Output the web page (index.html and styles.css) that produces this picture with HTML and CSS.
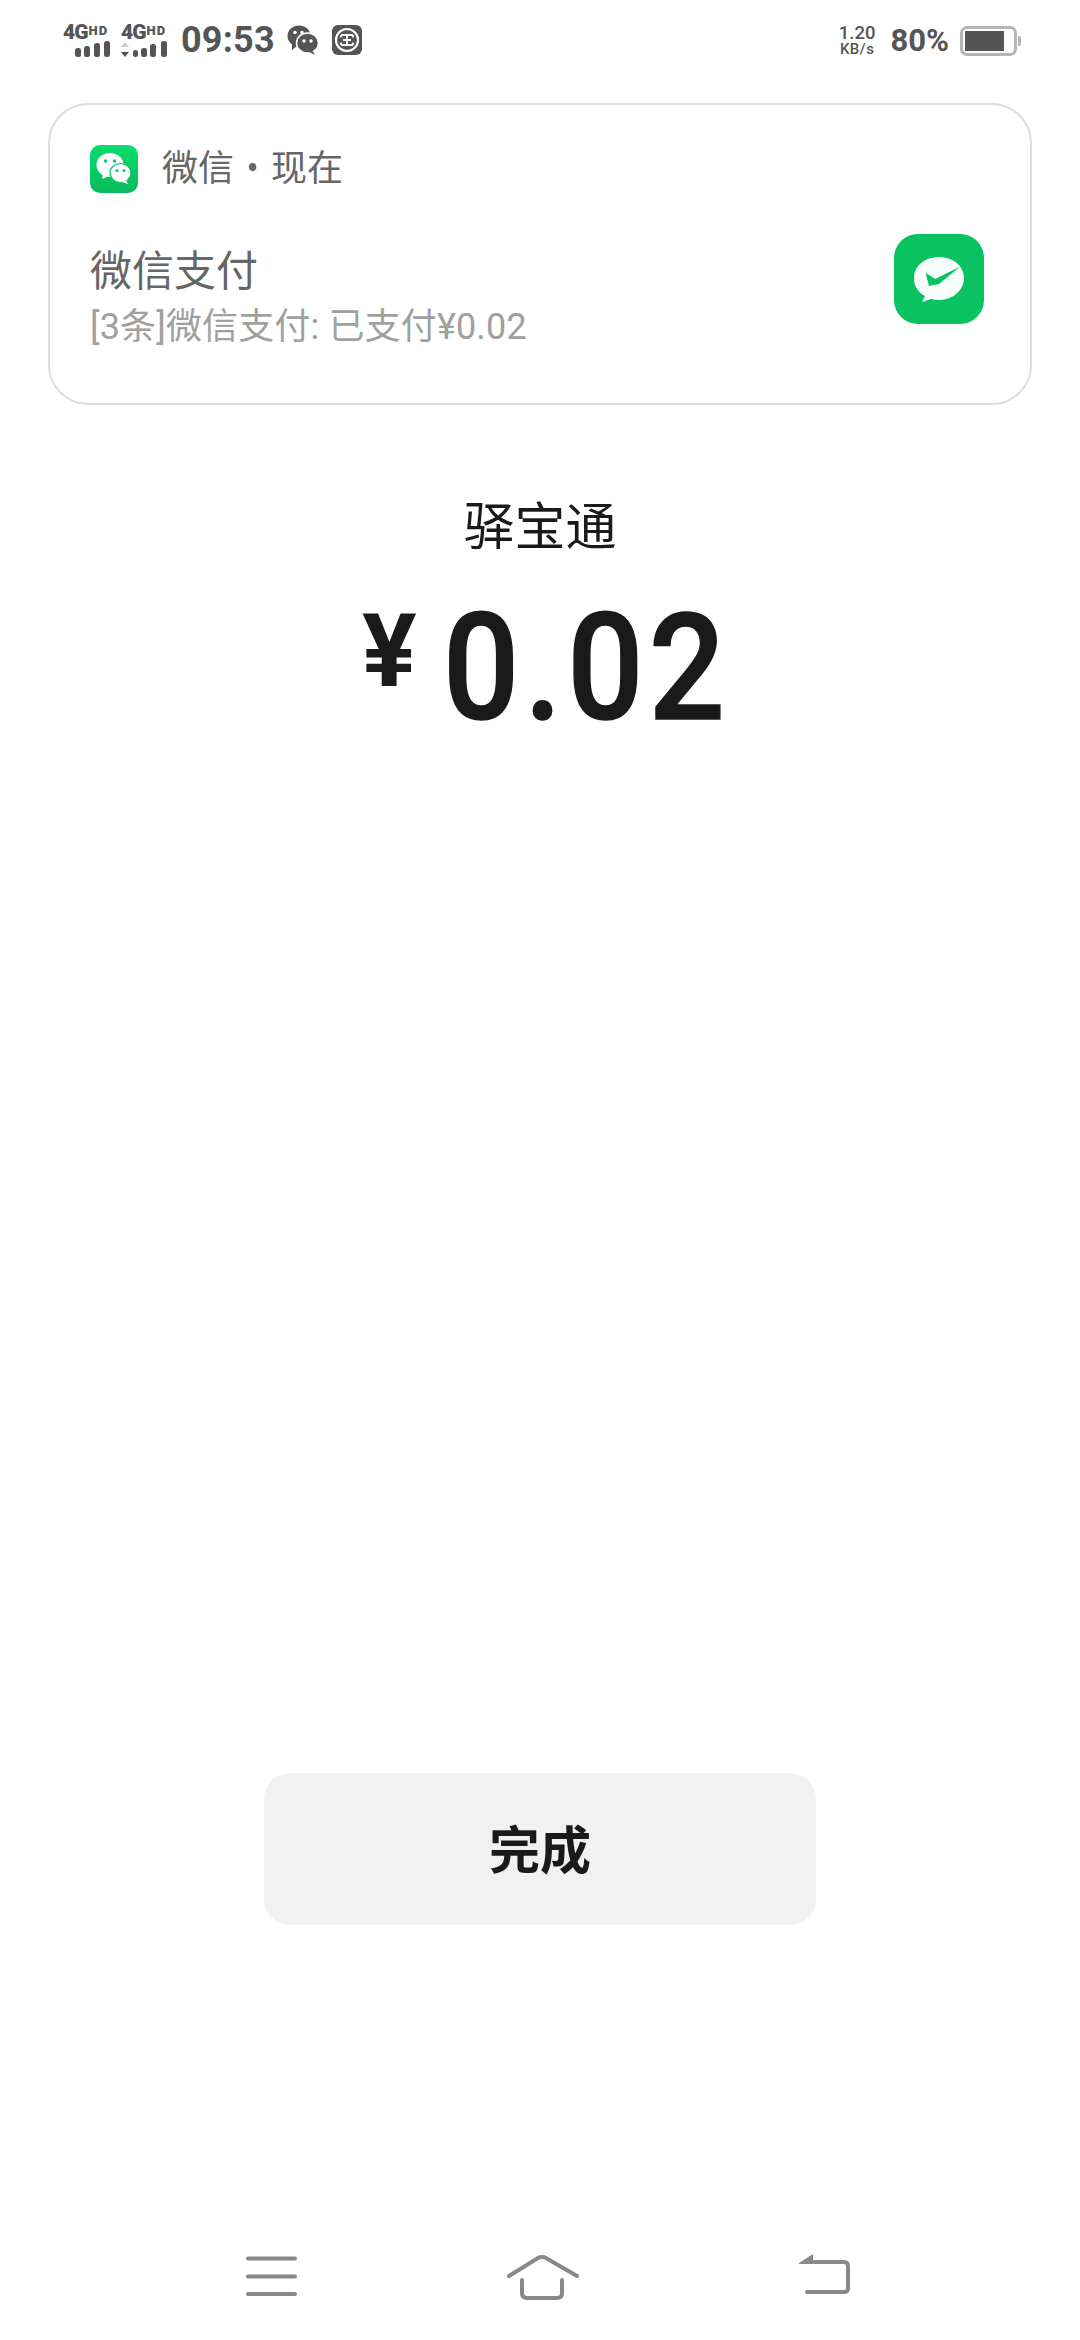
FILE: index.html
```html
<!DOCTYPE html>
<html lang="zh">
<head>
<meta charset="utf-8">
<title>支付成功</title>
<link rel="stylesheet" href="styles.css">
</head>
<body>
<div class="screen">
  <header class="status">
    <div class="status-left">
      <div class="sig">
        <div class="sig-label"><span class="g4">4G</span><span class="hd">HD</span></div>
        <svg class="bars" width="36" height="17" viewBox="0 0 36 17"><g fill="#555"><rect x="1" y="7" width="6" height="9" rx="2.5"/><rect x="10" y="5" width="6" height="11" rx="2.5"/><rect x="20" y="2" width="6" height="14" rx="2.5"/><rect x="30" y="0" width="6" height="16" rx="2.5"/></g></svg>
      </div>
      <div class="sig">
        <div class="sig-label"><span class="g4">4G</span><span class="hd">HD</span></div>
        <svg class="bars" width="48" height="17" viewBox="0 0 48 17"><path d="M1 6 5 1 9 6z" fill="#ccc"/><path d="M1 11h8l-4 5z" fill="#555"/><g fill="#555"><rect x="13" y="9" width="5" height="7" rx="2.5"/><rect x="21" y="7" width="6" height="9" rx="2.5"/><rect x="30" y="3" width="6" height="13" rx="2.5"/><rect x="41" y="0" width="6" height="16" rx="2.5"/></g></svg>
      </div>
      <span class="time">09:53</span>
      <svg class="st-wx" width="31" height="30" viewBox="0 0 31 30"><ellipse cx="12" cy="11" rx="11.500" ry="10.500" fill="#555"/><path d="M5 17 5 25 11 20z" fill="#555"/><ellipse cx="20.500" cy="18" rx="11" ry="10" fill="#555" stroke="#fff" stroke-width="1.500"/><path d="M25 25 28 30 22 27z" fill="#555"/><circle cx="8" cy="7.500" r="1.800" fill="#fff"/><circle cx="15" cy="7.500" r="1.800" fill="#fff"/><circle cx="17" cy="16" r="1.800" fill="#fff"/><circle cx="24" cy="16" r="1.800" fill="#fff"/></svg>
      <svg class="st-bank" width="30" height="30" viewBox="0 0 30 30"><rect width="30" height="30" rx="6" fill="#555"/><circle cx="15" cy="15" r="11" fill="none" stroke="#fff" stroke-width="2.200"/><path d="M9 10h12M15 10v10M11 15h8M9 20h12M9 10v2.500M21 10v2.500M9 17.500V20M21 17.500V20" fill="none" stroke="#fff" stroke-width="1.800"/></svg>
    </div>
    <div class="status-right">
      <div class="speed"><span class="speed-n">1.20</span><span class="speed-u">KB/s</span></div>
      <span class="pct">80%</span>
      <div class="battery"><div class="battery-body"><div class="battery-fill"></div></div><div class="battery-nub"></div></div>
    </div>
  </header>

  <section class="card">
    <div class="card-head">
      <svg class="app-icon" width="48" height="48" viewBox="0 0 48 48">
        <defs><linearGradient id="wxg" x1="0" y1="0" x2="0" y2="1"><stop offset="0" stop-color="#0bdc6d"/><stop offset="1" stop-color="#07bb5c"/></linearGradient></defs>
        <rect width="48" height="48" rx="10" fill="url(#wxg)"/>
        <ellipse cx="20" cy="20" rx="13.500" ry="12" fill="#fff"/><path d="M13 29 12 34 19 31z" fill="#fff"/>
        <ellipse cx="30.500" cy="28" rx="10.500" ry="9.500" fill="#fff" stroke="#0ccb66" stroke-width="1.200"/><path d="M36 35 38 39 32 37z" fill="#fff"/>
        <circle cx="15.500" cy="16" r="1.700" fill="#0ccb66"/><circle cx="24.500" cy="16" r="1.700" fill="#0ccb66"/><circle cx="27" cy="25.500" r="1.500" fill="#0ccb66"/><circle cx="34" cy="25.500" r="1.500" fill="#0ccb66"/>
      </svg>
      <span class="app-name">微信 • 现在</span>
    </div>
    <div class="card-body">
      <div class="card-text">
        <div class="card-title">微信支付</div>
        <div class="card-sub">[3条]微信支付: 已支付¥0.02</div>
      </div>
      <svg class="pay-icon" width="90" height="90" viewBox="0 0 90 90">
        <rect width="90" height="90" rx="24" fill="#0ac360"/>
        <path d="M45 23c-14 0-25 9-25 21 0 8 4 14 11 18l-3 6 9-3c2 .5 5 1 8 1 14 0 25-10 25-22S59 23 45 23z" fill="#fff" opacity=".97"/>
        <path d="M31.600 38.700 41 45 66 32.700 45 50 35 52z" fill="#0ac360"/>
      </svg>
    </div>
  </section>

  <section class="summary">
    <div class="merchant">驿宝通</div>
    <div class="amount"><span class="yen">¥</span><span class="num">0.02</span></div>
  </section>

  <div class="actions"><button class="done">完成</button></div>

  <nav class="navbar">
    <svg width="52" height="40" viewBox="0 0 52 40"><path d="M2 2.500h47M2 20.500h47M2 38h47" fill="none" stroke="#888" stroke-width="4" stroke-linecap="round"/></svg>
    <svg class="nav-home" width="72" height="46" viewBox="0 0 72 46"><path d="M2 21 31 3q4-2 8 0l31 18M15 25v13q0 5 5 5h30q5 0 5-5V25" fill="none" stroke="#888" stroke-width="4" stroke-linecap="round"/></svg>
    <svg class="nav-back" width="52" height="42" viewBox="0 0 52 42"><path d="M16 9h30q4 0 4 4v22q0 4-4 4H9" fill="none" stroke="#888" stroke-width="4" stroke-linecap="round"/><path d="M1 10 15 1v10H1z" fill="#888"/></svg>
  </nav>
</div>
</body>
</html>
```
FILE: styles.css
```css
* { box-sizing: border-box; }
html, body { margin: 0; padding: 0; background: #fff; }
body { font-family: Roboto, "Noto Sans CJK SC", sans-serif; }
.screen { width: 1080px; height: 2340px; display: flex; flex-direction: column; overflow: hidden; background: #fff; }

.status { height: 84px; padding: 22px 59px 0 63px; display: flex; justify-content: space-between; align-items: flex-start; color: #555; }
.status-left, .status-right { display: flex; align-items: center; }
.sig { width: 47px; margin-right: 10px; display: flex; flex-direction: column; align-items: flex-end; }
.sig + .sig { width: 48px; margin-right: 13px; }
.sig-label { display: flex; width: 47px; height: 19px; align-items: flex-start; line-height: 1; font-weight: 900; }
.g4 { font-size: 21px; letter-spacing: -1px; }
.hd { font-size: 13px; margin-left: 1px; margin-top: 2px; letter-spacing: 1px; }
.bars { display: block; }
.time { font-size: 36px; font-weight: 700; line-height: 36px; margin-right: 12px; letter-spacing: .2px; }
.st-wx { margin-right: 14px; }
.speed { display: flex; flex-direction: column; align-items: center; margin-right: 15px; line-height: 1; font-weight: 500; }
.speed-n { font-size: 18.5px; }
.speed-u { font-size: 15px; letter-spacing: .5px; }
.pct { font-size: 31px; font-weight: 700; margin-right: 11px; }
.battery { display: flex; align-items: center; }
.battery-body { width: 57px; height: 30px; border: 3px solid #b5b5b5; border-radius: 7px; padding: 2px; }
.battery-fill { width: 39px; height: 100%; background: #555; }
.battery-nub { width: 3px; height: 10px; background: #b5b5b5; margin-left: 1px; border-radius: 0 2px 2px 0; }

.card { margin: 19px 48px 0; height: 302px; border: 2px solid #dcdcdc; border-radius: 40px; padding: 40px 46px 0 40px; }
.card-head { display: flex; align-items: center; gap: 24px; }
.app-icon { flex: none; }
.app-name { font-size: 36px; line-height: 48px; color: #666; word-spacing: 3.5px; }
.card-body { display: flex; justify-content: space-between; align-items: flex-start; margin-top: 41px; }
.card-text { padding-top: 13px; }
.card-title { font-size: 42px; line-height: 50px; color: #666; }
.card-sub { font-size: 36px; line-height: 46px; color: #a0a0a0; margin-top: 7px; letter-spacing: .15px; }

.summary { display: flex; flex-direction: column; align-items: center; margin-top: 88px; color: #1a1a1a; }
.merchant { font-size: 51px; line-height: 70px; }
.amount { display: flex; align-items: flex-start; margin-top: 30px; padding-left: 12px; }
.yen { font-size: 102px; font-weight: 700; line-height: 116px; margin-right: -6px; }
.num { font-size: 149px; font-weight: 500; -webkit-text-stroke: 1.5px #1a1a1a; line-height: 150px; letter-spacing: 6px; transform: scaleX(.9); transform-origin: right center; }

.actions { flex: 1; display: flex; flex-direction: column; justify-content: flex-end; align-items: center; }
.done { width: 552px; height: 152px; border: 0; border-radius: 26px; padding: 0 0 5px; background: #f1f1f1; color: #1a1a1a; font: 700 51px Roboto, "Noto Sans CJK SC", sans-serif; }

.navbar { height: 415px; padding: 331px 0 0 246px; display: flex; align-items: flex-start; gap: 209px; }
.nav-home { margin-top: -1px; margin-right: 10px; }
.nav-back { margin-top: -3px; }
```
